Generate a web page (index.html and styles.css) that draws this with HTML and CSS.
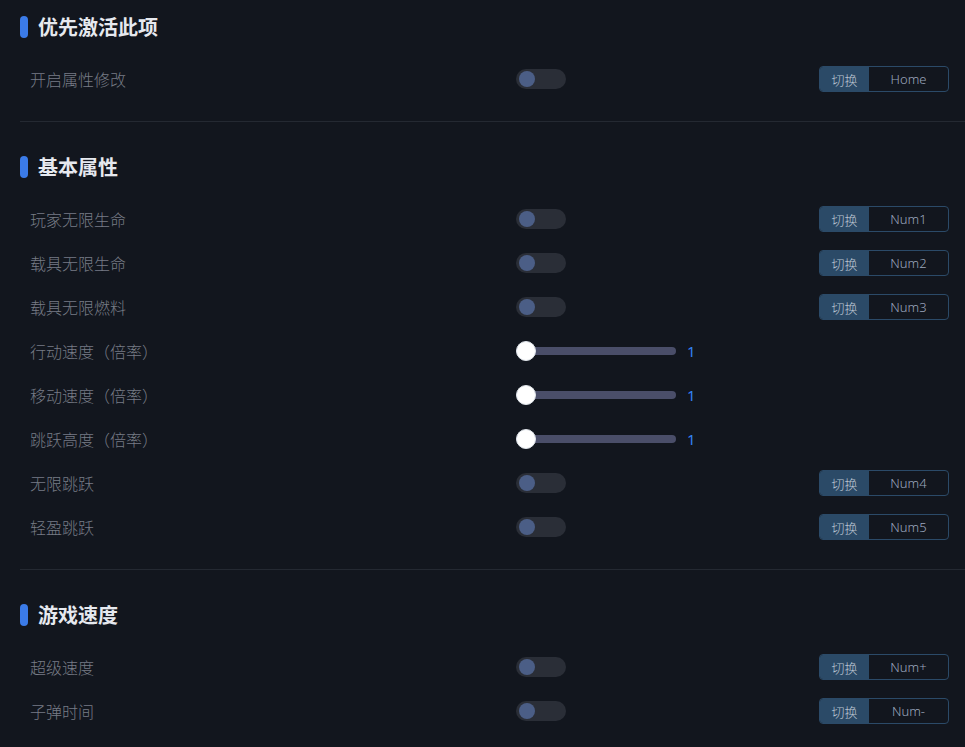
FILE: index.html
```html
<!DOCTYPE html>
<html lang="zh">
<head>
<meta charset="utf-8">
<title>属性修改</title>
<link rel="stylesheet" href="styles.css">
</head>
<body>
<div class="page">
  <section class="section">
    <h2 class="title">优先激活此项</h2>
    <div class="row">
      <span class="label">开启属性修改</span>
      <span class="toggle"><span class="knob"></span></span>
      <span class="hotkey"><span class="hk-btn">切换</span><span class="hk-key">Home</span></span>
    </div>
  </section>

  <section class="section">
    <h2 class="title">基本属性</h2>
    <div class="row">
      <span class="label">玩家无限生命</span>
      <span class="toggle"><span class="knob"></span></span>
      <span class="hotkey"><span class="hk-btn">切换</span><span class="hk-key">Num1</span></span>
    </div>
    <div class="row">
      <span class="label">载具无限生命</span>
      <span class="toggle"><span class="knob"></span></span>
      <span class="hotkey"><span class="hk-btn">切换</span><span class="hk-key">Num2</span></span>
    </div>
    <div class="row">
      <span class="label">载具无限燃料</span>
      <span class="toggle"><span class="knob"></span></span>
      <span class="hotkey"><span class="hk-btn">切换</span><span class="hk-key">Num3</span></span>
    </div>
    <div class="row">
      <span class="label">行动速度（倍率）</span>
      <span class="slider"><span class="track"></span><span class="thumb"></span><span class="value">1</span></span>
      <span></span>
    </div>
    <div class="row">
      <span class="label">移动速度（倍率）</span>
      <span class="slider"><span class="track"></span><span class="thumb"></span><span class="value">1</span></span>
      <span></span>
    </div>
    <div class="row">
      <span class="label">跳跃高度（倍率）</span>
      <span class="slider"><span class="track"></span><span class="thumb"></span><span class="value">1</span></span>
      <span></span>
    </div>
    <div class="row">
      <span class="label">无限跳跃</span>
      <span class="toggle"><span class="knob"></span></span>
      <span class="hotkey"><span class="hk-btn">切换</span><span class="hk-key">Num4</span></span>
    </div>
    <div class="row">
      <span class="label">轻盈跳跃</span>
      <span class="toggle"><span class="knob"></span></span>
      <span class="hotkey"><span class="hk-btn">切换</span><span class="hk-key">Num5</span></span>
    </div>
  </section>

  <section class="section">
    <h2 class="title">游戏速度</h2>
    <div class="row">
      <span class="label">超级速度</span>
      <span class="toggle"><span class="knob"></span></span>
      <span class="hotkey"><span class="hk-btn">切换</span><span class="hk-key">Num+</span></span>
    </div>
    <div class="row">
      <span class="label">子弹时间</span>
      <span class="toggle"><span class="knob"></span></span>
      <span class="hotkey"><span class="hk-btn">切换</span><span class="hk-key">Num-</span></span>
    </div>
  </section>
</div>
</body>
</html>
```

FILE: styles.css
```css
html, body {
  margin: 0;
  padding: 0;
  background: #12161e;
  height: 100%;
  overflow: hidden;
}
body {
  font-family: "Noto Sans CJK SC", "Noto Sans", sans-serif;
  color: #777c86;
}
.page {
  padding-left: 20px;
}
.section {
  padding: 34px 0 20px;
  border-bottom: 1px solid #242932;
}
.section:first-child {
  padding-top: 16px;
}
.section:last-child {
  border-bottom: none;
}
.title {
  margin: 0 0 19px;
  height: 22px;
  display: flex;
  align-items: center;
  gap: 10px;
  font-size: 20px;
  font-weight: 700;
  color: #e6e9ef;
  line-height: 22px;
}
.title::before {
  content: "";
  width: 8px;
  height: 22px;
  border-radius: 4px;
  background: #3b7be8;
}
.row {
  height: 44px;
  display: grid;
  grid-template-columns: 486px 1fr auto;
  align-items: center;
  padding: 0 16px 0 10px;
}
.label {
  font-size: 16px;
  font-weight: 300;
  color: #777c86;
}
.toggle {
  position: relative;
  width: 50px;
  height: 20px;
  border-radius: 10px;
  background: #2a2e37;
}
.knob {
  position: absolute;
  left: 3px;
  top: 2px;
  width: 16px;
  height: 16px;
  border-radius: 50%;
  background: #4b5e86;
}
.hotkey {
  display: flex;
  width: 130px;
  height: 26px;
  box-sizing: border-box;
  border: 1px solid #2b4a68;
  border-radius: 4px;
  overflow: hidden;
  font-size: 13px;
  font-weight: 300;
}
.hk-btn {
  width: 49px;
  background: #2b4a67;
  color: #bcc5d2;
  display: flex;
  align-items: center;
  justify-content: center;
}
.hk-key {
  flex: 1;
  display: flex;
  align-items: center;
  justify-content: center;
  color: #9ca6bd;
  font-family: "Noto Sans", sans-serif;
}
.slider {
  position: relative;
  display: flex;
  align-items: center;
  height: 20px;
}
.track {
  width: 160px;
  height: 8px;
  border-radius: 4px;
  background: #4a4e69;
}
.thumb {
  position: absolute;
  left: 0;
  top: 0;
  width: 20px;
  height: 20px;
  box-sizing: border-box;
  border-radius: 50%;
  background: #ffffff;
  border: 1px solid #dfe4ea;
}
.value {
  margin-left: 11px;
  font-size: 15px;
  font-weight: 400;
  color: #3281f5;
  font-family: "Noto Sans", sans-serif;
}
```
